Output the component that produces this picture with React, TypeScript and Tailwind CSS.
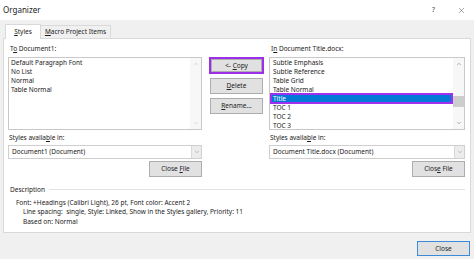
import { ChevronDown, ChevronUp, X } from 'lucide-react';

const LEFT_ITEMS = ['Default Paragraph Font', 'No List', 'Normal', 'Table Normal'];
const RIGHT_ITEMS = ['Subtle Emphasis', 'Subtle Reference', 'Table Grid', 'Table Normal', 'Title', 'TOC 1', 'TOC 2', 'TOC 3'];

function Btn({ children, className = '' }: { children: React.ReactNode; className?: string }) {
  return (
    <div className={'h-[16px] bg-[#e1e1e1] border border-[#adadad] flex items-center justify-center text-[6.5px] text-[#222] ' + className}>
      <span>{children}</span>
    </div>
  );
}

function Combo({ label }: { label: string }) {
  return (
    <div className="h-[14px] bg-white border border-[#cfcfcf] flex items-center">
      <span className="flex-1 pl-[3px] text-[6.5px] text-[#222]">{label}</span>
      <div className="w-[10px] h-full bg-[#ececec] border-l border-[#d9d9d9] flex items-center justify-center">
        <ChevronDown className="w-[6px] h-[6px] text-[#888]" strokeWidth={2} />
      </div>
    </div>
  );
}

function ScrollBar({ thumb }: { thumb: boolean }) {
  return (
    <div className="w-[11px] h-full bg-[#f7f7f7] flex flex-col items-center">
      <div className="h-[12px] flex items-center justify-center">
        <ChevronUp className={'w-[6px] h-[6px] ' + (thumb ? 'text-[#666]' : 'text-[#bbb]')} strokeWidth={2} />
      </div>
      <div className="flex-1 w-full flex flex-col">
        {thumb && (
          <>
            <div className="h-[26px]" />
            <div className="h-[11px] w-full bg-[#cdcdcd]" />
          </>
        )}
      </div>
      <div className="h-[12px] flex items-center justify-center">
        <ChevronDown className={'w-[6px] h-[6px] ' + (thumb ? 'text-[#666]' : 'text-[#bbb]')} strokeWidth={2} />
      </div>
    </div>
  );
}

export default function App() {
  return (
    <div
      className="w-[474px] h-[259px] bg-[#f0f0f0] overflow-hidden flex flex-col text-[#1b1b1b]"
      style={{ fontFamily: '"Noto Sans", "Open Sans", sans-serif' }}
    >
      {/* title bar */}
      <div className="h-[20px] bg-white flex items-center justify-between pl-[3px] pr-[8px]">
        <span className="text-[8px]">Organizer</span>
        <div className="flex items-center gap-[22px] text-[#444]">
          <span className="text-[7.5px]">?</span>
          <X className="w-[9px] h-[9px]" strokeWidth={1.2} />
        </div>
      </div>

      {/* tabs */}
      <div className="h-[18px] flex items-end pl-[5px]">
        <div className="w-[36px] h-[15px] bg-white border border-b-0 border-[#d9d9d9] flex items-center justify-center text-[6.5px] relative top-[1px]">
          <span><span className="underline">S</span>tyles</span>
        </div>
        <div className="w-[70px] h-[13px] bg-[#f0f0f0] border border-b-0 border-l-0 border-[#d9d9d9] flex items-center justify-center text-[6.5px]">
          <span><span className="underline">M</span>acro Project Items</span>
        </div>
      </div>

      {/* tab panel */}
      <div className="mx-[3px] h-[195px] bg-white border border-[#d9d9d9] pl-[4px] pt-[5px] flex flex-col">
        <div className="flex">
          {/* left */}
          <div className="w-[194px] flex flex-col">
            <div className="h-[13px] text-[6.5px] pl-[2px]">T<span className="underline">o</span> Document1:</div>
            <div className="h-[73px] border border-[#c8c8c8] flex">
              <div className="flex-1 pl-[2px] flex flex-col">
                {LEFT_ITEMS.map((t) => (
                  <div key={t} className="h-[9px] leading-[9px] text-[6.5px]">{t}</div>
                ))}
              </div>
              <ScrollBar thumb={false} />
            </div>
            <div className="h-[15px] flex items-center text-[6.5px] pl-[1px]">
              <span>Styles availa<span className="underline">b</span>le in:</span>
            </div>
            <Combo label="Document1 (Document)" />
            <div className="flex justify-end mt-[2px]">
              <Btn className="w-[53px]">Close <span className="underline">F</span>ile</Btn>
            </div>
          </div>

          {/* middle buttons */}
          <div className="w-[55px] ml-[7px] pt-[13px] flex flex-col">
            <div className="h-[17px] border-2 border-[#9b30e8] flex">
              <Btn className="flex-1 h-full border-[#9a9a9a]">&lt;- <span className="underline">C</span>opy</Btn>
            </div>
            <div className="px-[1px] mt-[4px]">
              <Btn><span className="underline">D</span>elete</Btn>
            </div>
            <div className="px-[1px] mt-[4px]">
              <Btn><span className="underline">R</span>ename...</Btn>
            </div>
          </div>

          {/* right */}
          <div className="w-[196px] ml-[5px] flex flex-col">
            <div className="h-[13px] text-[6.5px] pl-[2px]">I<span className="underline">n</span> Document Title.docx:</div>
            <div className="h-[73px] border border-[#c8c8c8] flex">
              <div className="flex-1 flex flex-col">
                {RIGHT_ITEMS.map((t) =>
                  t === 'Title' ? (
                    <div key={t} className="h-[11px] -my-[1px] border-2 border-[#a030f0] bg-[#0078d7] text-white text-[6.5px] leading-[7px] pl-[1px]">
                      {t}
                    </div>
                  ) : (
                    <div key={t} className="h-[9px] leading-[9px] text-[6.5px] pl-[3px]">{t}</div>
                  )
                )}
              </div>
              <ScrollBar thumb />
            </div>
            <div className="h-[15px] flex items-center text-[6.5px] pl-[1px]">
              <span>Styles availa<span className="underline">b</span>le in:</span>
            </div>
            <Combo label="Document Title.docx (Document)" />
            <div className="flex justify-end mt-[2px]">
              <Btn className="w-[53px]">Clos<span className="underline">e</span> File</Btn>
            </div>
          </div>
        </div>

        {/* description */}
        <div className="mt-[8px] pr-[5px] flex items-center gap-[4px]">
          <span className="text-[6.5px] pl-[2px]">Description</span>
          <div className="flex-1 h-px bg-[#e3e3e3]" />
        </div>
        <div className="pl-[8px] pt-[3px] text-[6.5px] leading-[9.5px]">
          <div>Font: +Headings (Calibri Light), 26 pt, Font color: Accent 2</div>
          <div className="pl-[7px]">Line spacing:&nbsp; single, Style: Linked, Show in the Styles gallery, Priority: 11</div>
          <div className="pl-[7px]">Based on: Normal</div>
        </div>
      </div>

      {/* footer */}
      <div className="flex-1 flex items-start justify-end pr-[4px] pt-[8px]">
        <div className="w-[53px] h-[15px] bg-[#e1e1e1] border-[1.5px] border-[#3c8ad8] flex items-center justify-center text-[6.5px] text-[#222]">
          Close
        </div>
      </div>
    </div>
  );
}
